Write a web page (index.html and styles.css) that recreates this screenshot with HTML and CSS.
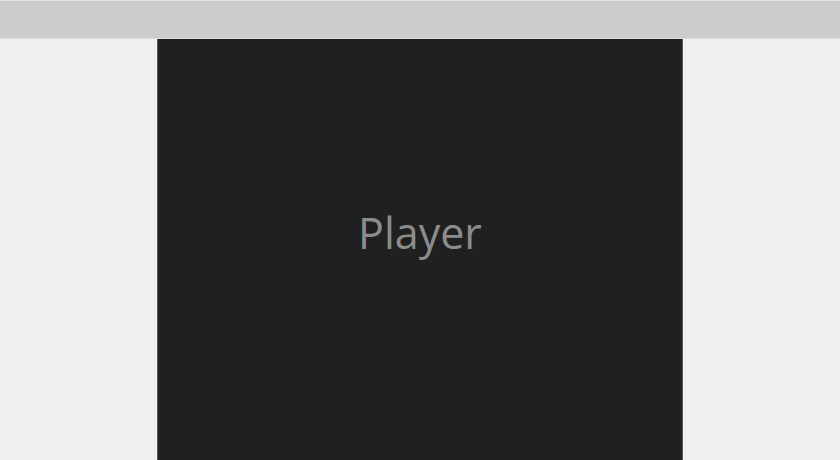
FILE: index.html
```html
<!DOCTYPE html>
<html>
<head>
<meta charset="utf-8">
<link rel="stylesheet" href="styles.css">
</head>
<body>
<div class="topbar"></div>
<div class="stage">
  <div class="player">
    <div class="player-label">Player</div>
  </div>
</div>
</body>
</html>
```
FILE: styles.css
```css
html, body {
  margin: 0;
  padding: 0;
  height: 100%;
  overflow: hidden;
}
body {
  background: #f0f0f0;
  font-family: "Open Sans", "Noto Sans", sans-serif;
}
.topbar {
  height: 37px;
  background: #cccccc;
  border-top: 1px solid #e4e4e4;
  border-bottom: 1px solid #dcdcdc;
  box-sizing: content-box;
}
.stage {
  display: flex;
  justify-content: center;
  height: calc(100% - 39px);
}
.player {
  width: 526px;
  background: #202020;
  border-left: 1px solid #555555;
  border-right: 1px solid #555555;
  display: flex;
  justify-content: center;
  padding-top: 164px;
  box-sizing: border-box;
}
.player-label {
  color: #8c8c8c;
  font-size: 43px;
  line-height: 60px;
  height: 60px;
}
```
